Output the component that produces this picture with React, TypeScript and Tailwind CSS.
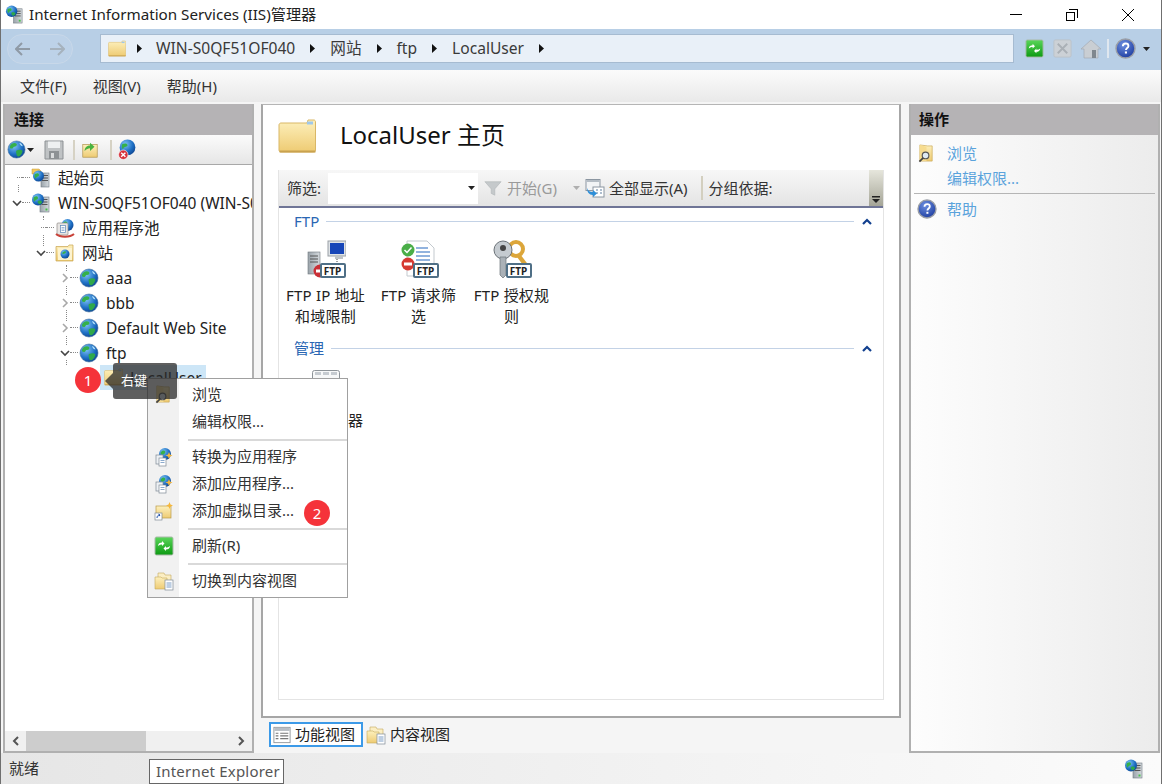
import type { ReactNode } from "react";

type IconProps = { className?: string };

function Defs() {
  return (
    <svg width="0" height="0" className="absolute">
      <defs>
        <linearGradient id="folder" x1="0" y1="0" x2="0" y2="1">
          <stop offset="0" stopColor="#fdf0bd" />
          <stop offset="1" stopColor="#eecb73" />
        </linearGradient>
        <radialGradient id="globe" cx="0.35" cy="0.3" r="0.8">
          <stop offset="0" stopColor="#7fc4f5" />
          <stop offset="0.6" stopColor="#1e6fc4" />
          <stop offset="1" stopColor="#0b3f8a" />
        </radialGradient>
        <linearGradient id="green" x1="0" y1="0" x2="0" y2="1">
          <stop offset="0" stopColor="#5ad65a" />
          <stop offset="1" stopColor="#0d9a12" />
        </linearGradient>
        <radialGradient id="help" cx="0.4" cy="0.3" r="0.8">
          <stop offset="0" stopColor="#6d8fe0" />
          <stop offset="1" stopColor="#17369a" />
        </radialGradient>
        <linearGradient id="metal" x1="0" y1="0" x2="1" y2="0">
          <stop offset="0" stopColor="#9aa3aa" />
          <stop offset="1" stopColor="#d5dade" />
        </linearGradient>
      </defs>
    </svg>
  );
}

function Globe({ className = "h-5 w-5" }: IconProps) {
  return (
    <svg viewBox="0 0 20 20" className={className}>
      <circle cx="10" cy="10" r="9" fill="url(#globe)" stroke="#3f6f9f" strokeWidth="0.6" />
      <path d="M5 4c2-1 4-1 5 0s0 3-2 3-1 2-3 2-2-1-2-2 1-2 2-3Z" fill="#35b04a" />
      <path d="M10 11c2-1 5-1 6 0s-1 5-3 6-3-1-3-2-1-3 0-4Z" fill="#2fa84a" />
      <path d="M13 3c2 .6 3 2 3.600 3.500-1.600 0-3-1-3.600-3.500Z" fill="#b7e3fb" />
    </svg>
  );
}

function Server({ className = "h-5 w-5" }: IconProps) {
  return (
    <svg viewBox="0 0 20 20" className={className}>
      <rect x="9" y="4" width="9" height="15" fill="url(#metal)" stroke="#707a82" strokeWidth="0.6" />
      <path d="M10.500 6.500h6M10.500 9h6M10.500 11.500h6" stroke="#555" strokeWidth="1" />
      <rect x="14.500" y="15.500" width="2" height="2" fill="#49c24b" />
      <circle cx="7" cy="6.500" r="6" fill="url(#globe)" />
      <path d="M3 4c2-1 4-1 4 1s-2 1-3 3-2-3-1-4Z" fill="#35b04a" />
      <path d="M7 8c2-1 4 0 4 1s-2 3-3 2-2-2-1-3Z" fill="#2fa84a" />
    </svg>
  );
}

function StartPage({ className = "h-5 w-5" }: IconProps) {
  return (
    <svg viewBox="0 0 20 20" className={className}>
      <path d="M1 1h7l2 2v3H1Z" fill="#f4c95d" stroke="#c49a3a" strokeWidth="0.5" />
      <rect x="10" y="5" width="8" height="14" fill="url(#metal)" stroke="#707a82" strokeWidth="0.6" />
      <path d="M11 7.500h6M11 10h6M11 12.500h6" stroke="#555" strokeWidth="1" />
      <circle cx="7.500" cy="8" r="5.500" fill="url(#globe)" />
      <path d="M4 6c2-1 4-1 4 1s-2 1-3 3-2-3-1-4Z" fill="#35b04a" />
    </svg>
  );
}

function AppPool({ className = "h-5 w-5" }: IconProps) {
  return (
    <svg viewBox="0 0 20 20" className={className}>
      <circle cx="12.500" cy="7" r="6" fill="url(#globe)" />
      <path d="M9 4c2-1 4 0 3 2s-3 2-4 1 0-2 1-3Z" fill="#35b04a" />
      <rect x="2" y="5" width="11" height="12" rx="1" fill="#e7e5e3" stroke="#8f8a86" strokeWidth="0.7" />
      <rect x="5.500" y="7.500" width="5" height="7" fill="#fff" stroke="#5b86b8" strokeWidth="0.7" />
      <path d="M6.500 9.500h3M6.500 11h3M6.500 12.500h3" stroke="#5b86b8" strokeWidth="0.6" />
      <path d="M1 16c4 3.500 14 3.500 18 0" fill="none" stroke="#c9433a" strokeWidth="2" />
    </svg>
  );
}

function Sites({ className = "h-5 w-5" }: IconProps) {
  return (
    <svg viewBox="0 0 20 20" className={className}>
      <path d="M1 3.500h12l1-1.500h4v16H1Z" fill="url(#folder)" stroke="#c7a34f" strokeWidth="0.7" />
      <rect x="3" y="5" width="14" height="12" fill="#fdf3cf" />
      <circle cx="10" cy="11" r="4.500" fill="url(#globe)" />
      <path d="M8 9c1-1 3-1 3 0s-2 2-3 2-1-1 0-2Z" fill="#35b04a" />
    </svg>
  );
}

function Folder({ className = "h-5 w-5" }: IconProps) {
  return (
    <svg viewBox="0 0 38 38" className={className}>
      <path d="M1 7c0-1 .8-2 2-2h26l1-3h6c1 0 1.500 1 1.500 2v28c0 1-.5 2-2 2H3c-1.200 0-2-1-2-2Z" fill="url(#folder)" stroke="#d9b767" strokeWidth="1" />
      <rect x="29" y="3.500" width="6" height="3" fill="#9fc7ea" />
      <path d="M1.500 32.500h36v2h-36Z" fill="#c9a24f" />
    </svg>
  );
}

function UpFolder({ className = "h-5 w-5" }: IconProps) {
  return (
    <svg viewBox="0 0 20 20" className={className}>
      <rect x="2" y="4" width="16" height="14" fill="url(#folder)" stroke="#a98a3d" strokeWidth="0.7" />
      <path d="M4 11c0-3 2-6 6-6V2l5 4.500L10 11V8c-2 0-4 1-6 3Z" fill="#48b23f" />
    </svg>
  );
}

function Save({ className = "h-5 w-5" }: IconProps) {
  return (
    <svg viewBox="0 0 20 20" className={className}>
      <path d="M1 1h18v18H1Z" fill="#bfc2c4" stroke="#8d9194" />
      <rect x="4" y="1.500" width="12" height="6.500" fill="#eef0f1" />
      <rect x="5" y="11" width="10" height="8" fill="#8d9194" />
      <rect x="7" y="13" width="3" height="5" fill="#d9dbdc" />
    </svg>
  );
}

function Disconnect({ className = "h-5 w-5" }: IconProps) {
  return (
    <svg viewBox="0 0 20 20" className={className}>
      <circle cx="10" cy="8" r="7.500" fill="url(#globe)" />
      <path d="M5 5c2-1 5-1 5 1s-3 1-4 3-2-3-1-4Z" fill="#35b04a" />
      <circle cx="6" cy="15" r="4.500" fill="#d8323c" stroke="#fff" strokeWidth="0.6" />
      <path d="m4 13 4 4m0-4-4 4" stroke="#fff" strokeWidth="1.300" />
    </svg>
  );
}

function Refresh({ className = "h-5 w-5" }: IconProps) {
  return (
    <svg viewBox="0 0 20 20" className={className}>
      <rect x="1" y="1" width="18" height="18" rx="1.500" fill="url(#green)" stroke="#aab9aa" />
      <path d="M4 10c0-2.500 2-3.500 4-3.500V5l2.500 2.500L8 10V8.500c-1 0-2.500.3-4 1.500Zm12 0c0 2.500-2 3.500-4 3.500V15l-2.500-2.500L12 10v1.500c1 0 2.500-.3 4-1.500Z" fill="#fff" />
    </svg>
  );
}

function Help({ className = "h-5 w-5" }: IconProps) {
  return (
    <svg viewBox="0 0 20 20" className={className}>
      <circle cx="10" cy="10" r="9" fill="url(#help)" stroke="#9a9ea6" strokeWidth="1.400" />
      <path d="M7.500 7.800C7.500 6 8.700 5.200 10.200 5.200s2.600 1 2.600 2.300c0 2-2.400 2-2.400 4" fill="none" stroke="#fff" strokeWidth="1.800" />
      <rect x="9.400" y="12.800" width="2" height="2" fill="#fff" />
    </svg>
  );
}

function Browse({ className = "h-5 w-5" }: IconProps) {
  return (
    <svg viewBox="0 0 20 20" className={className}>
      <path d="M3 1l8 1 5 0v16H3Z" fill="url(#folder)" stroke="#c8a650" strokeWidth="0.7" />
      <path d="M3 1l7 2v15H3Z" fill="#f7dc8f" />
      <circle cx="9" cy="12" r="3.500" fill="#dfeaf3" stroke="#555" strokeWidth="1.200" />
      <path d="m6.500 14.500-4 4" stroke="#444" strokeWidth="1.800" />
    </svg>
  );
}

function AddApp({ className = "h-5 w-5" }: IconProps) {
  return (
    <svg viewBox="0 0 20 20" className={className}>
      <circle cx="11" cy="7" r="6" fill="url(#globe)" />
      <path d="M8 4c2-1 4 0 3 2s-3 2-4 1 0-2 1-3Z" fill="#35b04a" />
      <rect x="2" y="8" width="7" height="9" fill="#eef1f4" stroke="#7f8a96" strokeWidth="0.7" />
      <rect x="5" y="11" width="7" height="8" fill="#fff" stroke="#7f8a96" strokeWidth="0.7" />
      <path d="M6.500 13.500h4M6.500 15.500h4" stroke="#5b86b8" strokeWidth="0.7" />
      <path d="m15 5 1 2.500 2.500 1-2.500 1-1 2.500-1-2.500-2.500-1 2.500-1Z" fill="#f6b73c" />
    </svg>
  );
}

function AddVdir({ className = "h-5 w-5" }: IconProps) {
  return (
    <svg viewBox="0 0 20 20" className={className}>
      <rect x="2" y="5" width="15" height="12" fill="url(#folder)" stroke="#b99a48" strokeWidth="0.7" />
      <path d="m15.500 1 1 2.500 2.500 1-2.500 1-1 2.500-1-2.500-2.500-1 2.500-1Z" fill="#f6b73c" />
      <rect x="1" y="12" width="7" height="7" fill="#fff" stroke="#7f8a96" strokeWidth="0.7" />
      <path d="M3 17c0-2 1-3 3-3m-1.500-.8L6 14l-1 1.300" fill="none" stroke="#1c4fa8" strokeWidth="1" />
    </svg>
  );
}

function ContentView({ className = "h-5 w-5" }: IconProps) {
  return (
    <svg viewBox="0 0 20 20" className={className}>
      <path d="M4 2h6l1 2h6v9H4Z" fill="#fbeec3" stroke="#c5a85c" strokeWidth="0.6" />
      <path d="M1 6h6l1 1h5v11H1Z" fill="url(#folder)" stroke="#c5a85c" strokeWidth="0.6" />
      <rect x="11" y="9" width="8" height="10" fill="#fff" stroke="#7f8a96" strokeWidth="0.7" />
      <path d="M12.500 12h5M12.500 14h5M12.500 16h5" stroke="#5b86b8" strokeWidth="0.8" />
    </svg>
  );
}

function FeatureView({ className = "h-5 w-5" }: IconProps) {
  return (
    <svg viewBox="0 0 20 20" className={className}>
      <rect x="1" y="1.500" width="18" height="17" fill="#fff" stroke="#8f9499" />
      <rect x="1.500" y="2" width="17" height="3.500" fill="#b9bec4" />
      <path d="M3 8h3M3 11h3M3 14h3M8 8h9M8 11h9M8 14h9" stroke="#777" strokeWidth="1.200" />
    </svg>
  );
}

function Funnel({ className = "h-5 w-5" }: IconProps) {
  return (
    <svg viewBox="0 0 20 20" className={className}>
      <path d="M1 3h18l-7 8v7l-4-2v-5Z" fill="#c5c9cb" stroke="#aeb2b4" strokeWidth="0.6" />
    </svg>
  );
}

function ShowAll({ className = "h-5 w-5" }: IconProps) {
  return (
    <svg viewBox="0 0 20 20" className={className}>
      <rect x="1" y="1.500" width="14" height="11" fill="#f2f4f6" stroke="#8b96a1" />
      <rect x="1.500" y="2" width="13" height="2" fill="#b5bdc5" />
      <rect x="8" y="9" width="11" height="10" fill="#fff" stroke="#8b96a1" />
      <path d="M11 12h2M15 12h2M11 15h2M15 15h2" stroke="#5f7f9f" strokeWidth="1.200" />
      <path d="M2 10c1 3 3 4 6 4v-2l4 3.500L8 19v-2c-4 0-6-3-6-7Z" fill="#2f8fd8" />
    </svg>
  );
}

function FtpBadge() {
  return (
    <span className="absolute bottom-0 right-0 flex h-[15px] w-[26px] items-center justify-center rounded-[2px] border-2 border-[#4f6f86] bg-white text-[10px] font-bold leading-none text-[#222]">
      FTP
    </span>
  );
}

function IpRestrict({ className = "h-5 w-5" }: IconProps) {
  return (
    <svg viewBox="0 0 40 38" className={className}>
      <rect x="2" y="12" width="12" height="22" fill="url(#metal)" stroke="#6f777d" strokeWidth="0.6" />
      <path d="M4 16h8M4 19h8M4 22h8" stroke="#555" strokeWidth="1" />
      <rect x="22" y="1" width="18" height="15" fill="#dfe3e6" stroke="#9aa0a5" />
      <rect x="24" y="3" width="14" height="11" fill="#1746b8" />
      <path d="M29 16h8v3H29Z" fill="#bfc4c8" />
      <path d="M31 19v5" stroke="#444" strokeDasharray="1 1" />
      <circle cx="14" cy="31" r="6.500" fill="#c92f36" />
      <rect x="10" y="29.500" width="8" height="3" fill="#fff" />
    </svg>
  );
}

function RequestFilter({ className = "h-5 w-5" }: IconProps) {
  return (
    <svg viewBox="0 0 40 38" className={className}>
      <path d="M8 1h20l7 7v28H8Z" fill="#fff" stroke="#c3c9ce" />
      <path d="M17 8h12M17 12h14M17 16h14M17 20h14M17 24h14" stroke="#6f9bd3" strokeWidth="1.300" />
      <circle cx="9" cy="10" r="6.500" fill="#4aae48" />
      <path d="m5.500 10 2.500 2.500 4.500-5" fill="none" stroke="#fff" strokeWidth="1.500" />
      <circle cx="9" cy="24" r="6.500" fill="#d63a32" />
      <rect x="5" y="22.500" width="8" height="3" fill="#fff" />
    </svg>
  );
}

function AuthRules({ className = "h-5 w-5" }: IconProps) {
  return (
    <svg viewBox="0 0 40 38" className={className}>
      <circle cx="24" cy="9" r="7" fill="none" stroke="#dca63a" strokeWidth="4" />
      <path d="m28 14 10 13-4 2-9-12Z" fill="#dca63a" />
      <circle cx="11" cy="10" r="9" fill="#c5cbd0" stroke="#6b7278" />
      <circle cx="11" cy="8" r="3" fill="#444" />
      <path d="M8 17h6v18l-3 3-3-3Z" fill="#aab1b7" stroke="#6b7278" strokeWidth="0.7" />
    </svg>
  );
}

function ConfigEditor({ className = "h-5 w-5" }: IconProps) {
  return (
    <svg viewBox="0 0 28 32" className={className}>
      <rect x="0.500" y="0.500" width="27" height="31" rx="2" fill="#f7f8f8" stroke="#8e9499" />
      <path d="M3 3.500h6M11 3.500h6M19 3.500h6" stroke="#c6cbd0" strokeWidth="3" />
    </svg>
  );
}

function Caret({ className = "" }: IconProps) {
  return (
    <svg viewBox="0 0 7 4" className={`h-[4px] w-[7px] ${className}`}>
      <path d="M0 0h7L3.500 4Z" fill="#222" />
    </svg>
  );
}

function CrumbArrow({ className = "mx-[15px]" }: IconProps) {
  return (
    <svg viewBox="0 0 5 9" className={`h-[9px] w-[5px] ${className}`}>
      <path d="M0 0l5 4.500L0 9Z" fill="#111" />
    </svg>
  );
}

function Crumb({ children }: { children: ReactNode }) {
  return (
    <>
      <span className="text-[15.6px] leading-none text-[#3a3a3a]">{children}</span>
      <CrumbArrow />
    </>
  );
}

function TreeRow({
  indent,
  state,
  icon,
  selected,
  children,
}: {
  indent: string;
  state?: "open" | "closed";
  icon: ReactNode;
  selected?: boolean;
  children: ReactNode;
}) {
  return (
    <div className={`flex h-[25px] items-center ${indent}`}>
      <span className="relative z-10 flex h-[14px] w-[10px] shrink-0 items-center justify-end bg-white">
        {state ? (
          <svg viewBox="0 0 10 10" className="h-[10px] w-[10px]">
            {state === "open" ? (
              <path d="M1 3l4 4 4-4" fill="none" stroke="#444" strokeWidth="1.600" />
            ) : (
              <path d="M3 1l4 4-4 4" fill="none" stroke="#a8a8a8" strokeWidth="1.600" />
            )}
          </svg>
        ) : (
          <span className="w-[5px] border-t border-dotted border-[#888]" />
        )}
      </span>
      <span className="mr-[1px] w-[8px] shrink-0 border-t border-dotted border-[#888]" />
      <div className={`flex h-[25px] shrink-0 items-center ${selected ? "-ml-[3px] bg-[#cde6f7] pl-[4px]" : ""}`}>
        {icon}
        <span className="ml-[3px] whitespace-nowrap px-[4px] text-[15.5px] leading-[22px] text-[#222]">{children}</span>
      </div>
    </div>
  );
}

function MenuItem({ icon, children }: { icon?: ReactNode; children: ReactNode }) {
  return (
    <div className="flex h-[27px] items-center">
      <span className="flex h-full w-[31px] shrink-0 items-center justify-center">{icon}</span>
      <span className="pl-[13px] text-[15px] leading-none text-[#333]">{children}</span>
    </div>
  );
}

function MenuSep() {
  return (
    <div className="flex h-[8px] items-center pt-[2px]">
      <span className="ml-[40px] h-[2px] flex-1 bg-[#d9d9d9]" />
    </div>
  );
}

function SectionHead({ title, className = "" }: { title: string; className?: string }) {
  return (
    <div className={`flex h-[20px] items-center pl-[15px] pr-[10px] ${className}`}>
      <span className="text-[15px] leading-none text-[#2a66b3]">{title}</span>
      <span className="mx-[7px] h-[1px] flex-1 bg-[#c3d2e6]" />
      <svg viewBox="0 0 10 7" className="mx-[1px] h-[7px] w-[10px]">
        <path d="M1 6l4-4 4 4" fill="none" stroke="#12408f" strokeWidth="2.200" />
      </svg>
    </div>
  );
}

function Feature({ icon, label }: { icon: ReactNode; label: ReactNode }) {
  return (
    <div className="flex w-[93px] flex-col items-center text-center">
      <div className="relative h-[38px] w-[40px]">
        {icon}
        <FtpBadge />
      </div>
      <div className="mt-[7px] whitespace-nowrap text-[15px] leading-[21px] tracking-[0.2px] text-[#222]">{label}</div>
    </div>
  );
}

export default function App() {
  return (
    <div className="relative flex h-[784px] w-[1162px] flex-col overflow-hidden border-x border-x-[#6f6f6f] bg-[#f5f5f5] font-['Noto_Sans','Noto_Sans_CJK_SC',sans-serif]">
      <Defs />

      {/* title bar */}
      <div className="flex h-[29px] shrink-0 items-center bg-white pl-[4px]">
        <Server className="h-[19px] w-[19px]" />
        <span className="ml-[5px] text-[15.2px] leading-none text-[#222]">Internet Information Services (IIS)管理器</span>
        <div className="ml-auto flex items-center gap-[44px] pr-[27px]">
          <span className="h-[1px] w-[12px] bg-black" />
          <span className="relative h-[12px] w-[12px]">
            <span className="absolute bottom-0 left-0 h-[9px] w-[9px] border border-black bg-white" />
            <span className="absolute right-0 top-0 h-[9px] w-[9px] border-r border-t border-black" />
          </span>
          <svg viewBox="0 0 12 12" className="h-[12px] w-[12px]">
            <path d="M0 0l12 12M12 0L0 12" stroke="#000" strokeWidth="1" />
          </svg>
        </div>
      </div>

      {/* address bar */}
      <div className="flex h-[41px] shrink-0 items-center bg-[#b8cfe6] pb-[2px] pl-[6px]">
        <div className="flex h-[30px] w-[66px] items-center justify-between rounded-[15px] border border-[#c8d8e9] bg-[#bdd2e8] px-[7px]">
          <svg viewBox="0 0 16 14" className="h-[14px] w-[16px]">
            <path d="M7 1L1 7l6 6M1 7h14" fill="none" stroke="#8f9aa6" strokeWidth="2" />
          </svg>
          <svg viewBox="0 0 16 14" className="h-[14px] w-[16px]">
            <path d="M9 1l6 6-6 6M15 7H1" fill="none" stroke="#a6b2bd" strokeWidth="2" />
          </svg>
        </div>
        <div className="ml-[27px] flex h-[29px] w-[914px] items-center border border-[#a6bbd1] bg-[#e9f0f8] pl-[7px]">
          <Folder className="h-[18px] w-[18px]" />
          <CrumbArrow className="ml-[11px] mr-[14px]" />
          <Crumb>WIN-S0QF51OF040</Crumb>
          <Crumb>网站</Crumb>
          <Crumb>ftp</Crumb>
          <Crumb>LocalUser</Crumb>
        </div>
        <div className="ml-[11px] flex items-center">
          <Refresh className="h-[19px] w-[19px]" />
          <svg viewBox="0 0 20 20" className="ml-[9px] h-[19px] w-[19px]">
            <rect x="1" y="1" width="18" height="18" rx="1.500" fill="#ccd1d6" stroke="#bcc2c8" />
            <path d="M5 5l10 10M15 5L5 15" stroke="#aab0b6" strokeWidth="2" />
          </svg>
          <svg viewBox="0 0 20 20" className="ml-[9px] h-[20px] w-[20px]">
            <path d="M10 1L0 10h3v9h14v-9h3Z" fill="#c9ced3" stroke="#a5abb1" strokeWidth="0.7" />
            <rect x="11" y="11" width="4" height="8" fill="#7f878e" />
          </svg>
          <span className="mx-[6px] h-[19px] w-[2px] bg-[#dfe7ef]" />
          <Help className="h-[21px] w-[21px]" />
          <Caret className="ml-[7px]" />
        </div>
      </div>

      {/* menu bar */}
      <div className="flex h-[32px] shrink-0 items-center gap-[26px] bg-[linear-gradient(#fbfbfb,#e9e9e9)] pl-[19px] text-[15px] leading-none text-[#333]">
        <span>文件(F)</span>
        <span>视图(V)</span>
        <span>帮助(H)</span>
      </div>

      {/* panels */}
      <div className="flex min-h-0 flex-1 gap-[7px] pl-[2px] pr-[1px] pt-[2px]">
        {/* connections */}
        <div className="flex w-[251px] shrink-0 flex-col border-2 border-[#b0b0b0] border-t-0 bg-white">
          <div className="flex h-[31px] shrink-0 items-center bg-[#b5b3b5] pl-[9px] text-[15px] font-bold leading-none text-[#111]">连接</div>
          <div className="flex h-[30px] shrink-0 items-center border-b border-[#a8a8a8] bg-[linear-gradient(#fbfbfb,#e6e6e6)] pl-[2px]">
            <Globe className="h-[19px] w-[19px]" />
            <Caret className="ml-[1px]" />
            <Save className="ml-[10px] h-[20px] w-[20px]" />
            <span className="ml-[9px] h-[20px] w-[2px] bg-[#d6d2c4]" />
            <UpFolder className="ml-[6px] h-[18px] w-[18px]" />
            <span className="ml-[11px] h-[20px] w-[2px] bg-[#d6d2c4]" />
            <Disconnect className="ml-[5px] h-[21px] w-[21px]" />
          </div>
          <div className="relative isolate min-h-0 flex-1 overflow-hidden">
            <span className="absolute left-[13px] top-[12px] h-[15px] border-l border-dotted border-[#888]" />
            <span className="absolute left-[38px] top-[51px] h-[30px] border-l border-dotted border-[#888]" />
            <span className="absolute left-[61px] top-[100px] h-[100px] border-l border-dotted border-[#888]" />
            <TreeRow indent="pl-[7px]" icon={<StartPage className="h-[20px] w-[20px] shrink-0" />}>起始页</TreeRow>
            <TreeRow indent="pl-[7px]" state="open" icon={<Server className="h-[20px] w-[20px] shrink-0" />}>WIN-S0QF51OF040 (WIN-S0QF51OF040\Administrator)</TreeRow>
            <TreeRow indent="pl-[31px]" icon={<AppPool className="h-[20px] w-[20px] shrink-0" />}>应用程序池</TreeRow>
            <TreeRow indent="pl-[31px]" state="open" icon={<Sites className="h-[20px] w-[20px] shrink-0" />}>网站</TreeRow>
            <TreeRow indent="pl-[55px]" state="closed" icon={<Globe className="h-[20px] w-[20px] shrink-0" />}>aaa</TreeRow>
            <TreeRow indent="pl-[55px]" state="closed" icon={<Globe className="h-[20px] w-[20px] shrink-0" />}>bbb</TreeRow>
            <TreeRow indent="pl-[55px]" state="closed" icon={<Globe className="h-[20px] w-[20px] shrink-0" />}>Default Web Site</TreeRow>
            <TreeRow indent="pl-[55px]" state="open" icon={<Globe className="h-[20px] w-[20px] shrink-0" />}>ftp</TreeRow>
            <TreeRow indent="pl-[79px]" selected icon={<Folder className="h-[19px] w-[19px] shrink-0" />}>LocalUser</TreeRow>
          </div>
          <div className="flex h-[20px] shrink-0 items-center bg-[#f0f0f0]">
            <span className="flex w-[21px] justify-center">
              <svg viewBox="0 0 8 10" className="h-[10px] w-[8px]"><path d="M6 1L2 5l4 4" fill="none" stroke="#555" strokeWidth="2" /></svg>
            </span>
            <span className="h-full w-[120px] bg-[#cdcdcd]" />
            <span className="ml-auto flex w-[22px] justify-center">
              <svg viewBox="0 0 8 10" className="h-[10px] w-[8px]"><path d="M2 1l4 4-4 4" fill="none" stroke="#555" strokeWidth="2" /></svg>
            </span>
          </div>
        </div>

        {/* center */}
        <div className="flex w-[640px] shrink-0 flex-col">
          <div className="flex min-h-0 flex-1 flex-col border-2 border-[#a6a6a6] border-t border-t-[#b5b5b5] bg-white px-[15px]">
            <div className="flex h-[65px] shrink-0 items-center pb-[2px]">
              <Folder className="h-[38px] w-[38px]" />
              <span className="mb-[4px] ml-[24px] text-[24px] leading-none text-[#111]">LocalUser 主页</span>
            </div>
            <div className="flex min-h-0 flex-1 flex-col border border-[#e4e4e4] border-t-0">
              <div className="flex h-[38px] shrink-0 items-center border-b-2 border-[#6f7596] bg-[linear-gradient(#f7f7f7,#e4e4e4)] pl-[8px]">
                <span className="text-[15px] leading-none text-[#333]">筛选:</span>
                <div className="ml-[7px] flex h-[31px] w-[150px] items-center justify-end bg-white pr-[3px]">
                  <Caret />
                </div>
                <Funnel className="ml-[6px] h-[18px] w-[18px]" />
                <span className="ml-[5px] text-[15px] leading-none text-[#9a9a9a]">开始(G)</span>
                <Caret className="ml-[16px] opacity-30" />
                <ShowAll className="ml-[5px] h-[20px] w-[20px]" />
                <span className="ml-[4px] text-[15px] leading-none text-[#333]">全部显示(A)</span>
                <span className="ml-[13px] h-[24px] w-[2px] bg-[#d3cfbf]" />
                <span className="ml-[6px] text-[15px] leading-none text-[#333]">分组依据:</span>
                <div className="ml-auto flex h-full w-[14px] items-end justify-center bg-[linear-gradient(#e6e6dc,#a5a597)] pb-[3px]">
                  <svg viewBox="0 0 8 7" className="h-[7px] w-[8px]">
                    <path d="M0 0h8v1.500H0ZM0 3h8L4 7Z" fill="#222" />
                  </svg>
                </div>
              </div>
              <SectionHead title="FTP" className="mt-[3px]" />
              <div className="flex pt-[9px]">
                <Feature icon={<IpRestrict className="h-[38px] w-[40px]" />} label={<>FTP IP 地址<br />和域限制</>} />
                <Feature icon={<RequestFilter className="h-[38px] w-[40px]" />} label={<>FTP 请求筛<br />选</>} />
                <Feature icon={<AuthRules className="h-[38px] w-[40px]" />} label={<>FTP 授权规<br />则</>} />
              </div>
              <SectionHead title="管理" className="mt-[11px]" />
              <div className="flex pt-[12px]">
                <div className="flex w-[93px] flex-col items-center text-center">
                  <ConfigEditor className="h-[32px] w-[28px]" />
                  <div className="mt-[8px] text-[15px] leading-[21px] text-[#222]">配置编辑器</div>
                </div>
              </div>
            </div>
            <div className="h-[16px] shrink-0" />
          </div>
          <div className="flex h-[35px] shrink-0 items-center pb-[2px] pl-[8px]">
            <div className="flex h-[25px] w-[94px] items-center border-2 border-[#3c9ae8] bg-white pl-[2px]">
              <FeatureView className="h-[18px] w-[18px]" />
              <span className="ml-[4px] text-[15px] leading-none text-[#222]">功能视图</span>
            </div>
            <ContentView className="ml-[3px] h-[20px] w-[20px]" />
            <span className="ml-[4px] text-[15px] leading-none text-[#222]">内容视图</span>
          </div>
        </div>

        {/* actions */}
        <div className="ml-[1px] flex w-[251px] shrink-0 flex-col border-2 border-[#b0b0b0] border-t-0 bg-[linear-gradient(90deg,#fdfdfd,#ececec)]">
          <div className="flex h-[31px] shrink-0 items-center bg-[#b5b3b5] pl-[8px] text-[15px] font-bold leading-none text-[#111]">操作</div>
          <div className="flex h-[25px] items-center pl-[6px] pt-[11px] text-[15px] leading-none text-[#5ba3dc]">
            <Browse className="h-[19px] w-[19px]" />
            <span className="ml-[11px]">浏览</span>
          </div>
          <div className="flex h-[25px] items-center pl-[36px] pt-[11px] text-[15px] leading-none text-[#5ba3dc]">编辑权限...</div>
          <div className="mx-[3px] mt-[8px] h-[1px] bg-[#b5b5b5]" />
          <div className="flex h-[28px] items-center pl-[6px] pt-[2px] text-[15px] leading-none text-[#5ba3dc]">
            <Help className="h-[20px] w-[20px]" />
            <span className="ml-[10px]">帮助</span>
          </div>
        </div>
      </div>

      {/* status bar */}
      <div className="flex h-[31px] shrink-0 items-center bg-[linear-gradient(90deg,#e6e6e6,#fbfbfb)] pl-[8px] pr-[17px]">
        <span className="text-[15px] leading-none text-[#333]">就绪</span>
        <Server className="ml-auto h-[20px] w-[20px]" />
      </div>

      {/* tooltip from the taskbar */}
      <div className="absolute left-[148px] top-[759px] flex h-[25px] w-[135px] items-center border border-[#666] bg-white pl-[6px] text-[15px] leading-none tracking-[0.2px] text-[#555]">
        Internet Explorer
      </div>

      {/* context menu */}
      <div className="absolute left-[146px] top-[378px] w-[201px] border border-[#a0a0a0] bg-[linear-gradient(90deg,#f1f1f1_31px,#ffffff_31px)] pb-[3px] pt-[2px]">
        <MenuItem icon={<Browse className="h-[19px] w-[19px]" />}>浏览</MenuItem>
        <MenuItem>编辑权限...</MenuItem>
        <MenuSep />
        <MenuItem icon={<AddApp className="h-[20px] w-[20px]" />}>转换为应用程序</MenuItem>
        <MenuItem icon={<AddApp className="h-[20px] w-[20px]" />}>添加应用程序...</MenuItem>
        <MenuItem icon={<AddVdir className="h-[20px] w-[20px]" />}>添加虚拟目录...</MenuItem>
        <MenuSep />
        <MenuItem icon={<Refresh className="h-[20px] w-[20px]" />}>刷新(R)</MenuItem>
        <MenuSep />
        <MenuItem icon={<ContentView className="h-[20px] w-[20px]" />}>切换到内容视图</MenuItem>
      </div>

      {/* annotations */}
      <div className="absolute left-[112px] top-[363px] flex h-[36px] w-[64px] items-center rounded-[3px] bg-[#2a2a2a]/75 pb-[2px] pl-[8px] text-[13px] leading-none text-white">
        <span className="absolute left-[-8px] top-[10px] h-0 w-0 border-y-[8px] border-r-[8px] border-y-transparent border-r-[#2a2a2a]/75" />
        右键
      </div>
      <span className="absolute left-[74px] top-[367px] flex h-[26px] w-[26px] items-center justify-center rounded-full bg-[#f5333a] text-[15px] leading-none text-white">1</span>
      <span className="absolute left-[303px] top-[500px] flex h-[26px] w-[26px] items-center justify-center rounded-full bg-[#f5333a] text-[15px] leading-none text-white">2</span>
    </div>
  );
}
